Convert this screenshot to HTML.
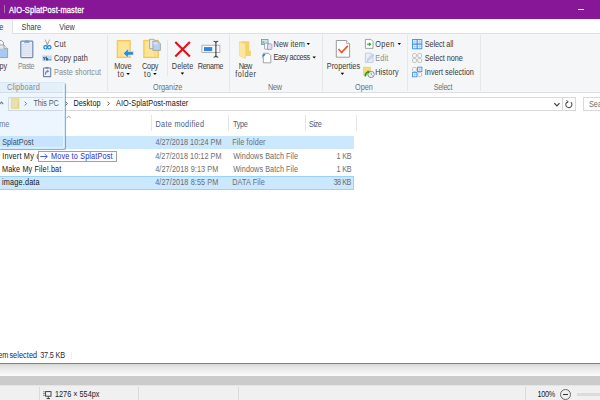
<!DOCTYPE html>
<html><head><meta charset="utf-8">
<style>
*{margin:0;padding:0;box-sizing:border-box}
html,body{width:600px;height:400px;overflow:hidden;background:#fff}
body{position:relative;font-family:"Liberation Sans",sans-serif;font-size:7.3px;line-height:1;color:#3a3a3a}
.a{position:absolute;white-space:nowrap}
.t{position:absolute;white-space:nowrap;line-height:8px;transform:scaleY(1.13);transform-origin:0 6.5px}
.sep{position:absolute;width:1px;background:#e6e7e8}
</style></head><body>

<div class="a" style="left:0;top:0;width:600px;height:19px;background:#881798"></div>
<div class="a" style="left:3.9px;top:4.6px;width:1.3px;height:8.6px;background:#a77ab3"></div>
<div class="a" style="left:577.5px;top:9px;width:6.5px;height:1px;background:#fff"></div>
<div class="a" style="left:0;top:19px;width:600px;height:15px;background:#fff;border-bottom:1px solid #dfe0e1"></div>
<div class="a" style="left:0;top:19px;width:13px;height:16px;background:#f5f6f7;border-right:1px solid #dfe0e1"></div>
<div class="a" style="left:0;top:34px;width:600px;height:59px;background:#f5f6f7;border-bottom:1px solid #dfe0e1"></div>
<div class="sep" style="left:107px;top:35px;height:56px"></div>
<div class="sep" style="left:229px;top:35px;height:56px"></div>
<div class="sep" style="left:322px;top:35px;height:56px"></div>
<div class="sep" style="left:407px;top:35px;height:56px"></div>
<div class="sep" style="left:480px;top:35px;height:56px"></div>
<div class="sep" style="left:167px;top:40px;height:36px"></div>
<div class="a" style="left:7.5px;top:97px;width:568px;height:13.5px;border:1px solid #d9d9d9"></div>
<div class="a" style="left:562px;top:97px;width:1px;height:13.5px;background:#d9d9d9"></div>
<div class="a" style="left:583px;top:97px;width:30px;height:13.5px;border:1px solid #d9d9d9"></div>
<div class="a" style="left:151px;top:115px;width:1px;height:16px;background:#e5e5e5"></div>
<div class="a" style="left:228px;top:115px;width:1px;height:16px;background:#e5e5e5"></div>
<div class="a" style="left:305px;top:115px;width:1px;height:16px;background:#e5e5e5"></div>
<div class="a" style="left:356px;top:115px;width:1px;height:16px;background:#e5e5e5"></div>
<div class="a" style="left:0;top:135.5px;width:354px;height:13.5px;background:#cce8ff"></div>
<div class="a" style="left:-2px;top:175.5px;width:356px;height:14px;background:#cce8ff;border:1px solid #99d1ff"></div>

<svg class="a" style="left:0;top:0" width="600" height="400" viewBox="0 0 600 400">
<!-- copy (partial) -->
<path d="M-6 40.5 H1.5 L3.5 42.5 V45" fill="none" stroke="#9a9a9a" stroke-width="1"/>
<path d="M-4 45 H4 L7.6 48.6 V57.6 H-4 Z" fill="#f4f8fd" stroke="#9a9a9a" stroke-width="1"/>
<rect x="-4" y="46" width="8" height="2.5" fill="#dde9f8"/>
<rect x="-4" y="48.5" width="11.1" height="8.6" fill="#a8c8f2"/>
<path d="M4 45 V48.6 H7.6" fill="#e8e8e8" stroke="#9a9a9a" stroke-width="0.8"/>
<!-- paste clipboard -->
<rect x="20.8" y="41.2" width="12" height="16.4" rx="0.8" fill="#e9eef8" stroke="#7189b2" stroke-width="1.2"/>
<g stroke="#c9d5ea" stroke-width="0.6">
<line x1="22" y1="44.5" x2="31.6" y2="44.5"/><line x1="22" y1="46.3" x2="31.6" y2="46.3"/><line x1="22" y1="48.1" x2="31.6" y2="48.1"/>
<line x1="22" y1="49.9" x2="31.6" y2="49.9"/><line x1="22" y1="51.7" x2="31.6" y2="51.7"/><line x1="22" y1="53.5" x2="31.6" y2="53.5"/><line x1="22" y1="55.3" x2="31.6" y2="55.3"/>
</g>
<path d="M24.5 42.6 L25.5 40.8 H28.1 L29.1 42.6 Z" fill="#8fa3c6" stroke="#7189b2" stroke-width="0.6"/>
<!-- scissors -->
<path d="M44.6 39.4 L45.4 39.4 L48.2 45 L47.2 45.4 Z" fill="#9c9ca4"/>
<path d="M50.1 39.4 L49.3 39.4 L46.5 45 L47.5 45.4 Z" fill="#9c9ca4"/>
<circle cx="45.5" cy="47.3" r="1.7" fill="none" stroke="#1c7fd4" stroke-width="1.1"/>
<circle cx="49.3" cy="47.3" r="1.7" fill="none" stroke="#1c7fd4" stroke-width="1.1"/>
<!-- copy path -->
<rect x="42.3" y="55.4" width="9.5" height="5.6" fill="#b7dbf8"/>
<path d="M43.1 56.9 L44.3 58.4 L45.5 56.9 M44.3 58.4 V60.2 M46.3 56.7 V60.1 H47.7 V58.5 H46.3" fill="none" stroke="#2e3a48" stroke-width="0.85"/>
<line x1="48.2" y1="59.7" x2="51.2" y2="59.7" stroke="#6686a6" stroke-width="0.8"/>
<!-- paste shortcut -->
<rect x="43.5" y="68" width="7.2" height="8.6" rx="0.4" fill="#eef2f9" stroke="#7085ae" stroke-width="1.15"/>
<rect x="45.6" y="67" width="2.9" height="1.5" fill="#7085ae"/>
<path d="M45.4 74.8 C45.5 72.3 46.3 71.2 48 71.2" fill="none" stroke="#7085ae" stroke-width="1.2"/>
<path d="M47.2 69.6 L49.3 71.2 L47.2 72.8 Z" fill="#7085ae"/>

<!-- move to -->
<rect x="117.2" y="40.6" width="13" height="17" fill="#fcdc78" stroke="#efc244" stroke-width="0.9"/>
<rect x="118.7" y="42.1" width="10" height="14" fill="#fde597"/>
<path d="M123.3 53.4 L128.3 48.6 V51.6 H133.4 V55.1 H128.3 V58 Z" fill="#2b8ae2" stroke="#fff" stroke-width="0.5"/>
<!-- copy to -->
<rect x="143.8" y="40.3" width="14.5" height="17.3" fill="#fcdc78" stroke="#efc244" stroke-width="0.9"/>
<rect x="145.3" y="41.8" width="11.5" height="14.3" fill="#fde597"/>
<line x1="155" y1="48" x2="155" y2="57.5" stroke="#f5d56c" stroke-width="0.7"/>
<path d="M149.6 39.3 H154 L156.2 41.5 V48.7 H149.6 Z" fill="#e6eef9" stroke="#9c9c9c" stroke-width="0.8"/>
<path d="M152.9 41 H157.8 L160.4 43.6 V50.4 H152.9 Z" fill="#b6d1f4" stroke="#9c9c9c" stroke-width="0.8"/>
<rect x="153.4" y="42.4" width="4" height="2" fill="#d8e6f8"/>
<!-- delete -->
<path d="M175.3 42 L189.9 56.4 M189.9 42 L175.3 56.4" stroke="#e0101c" stroke-width="2.1"/>
<!-- rename -->
<rect x="201.9" y="45.2" width="18" height="7.2" fill="#f8f8f8" stroke="#a2a2a2" stroke-width="0.8"/>
<rect x="204" y="47.1" width="8.2" height="4" fill="#2b88e0"/>
<path d="M213.6 41.3 Q215.9 41.3 215.9 43 V55.6 Q215.9 57.2 213.6 57.2 M218.2 41.3 Q215.9 41.3 215.9 43 M218.2 57.2 Q215.9 57.2 215.9 55.6" fill="none" stroke="#3a3a3a" stroke-width="1.1"/>

<!-- new folder -->
<path d="M240.5 41.2 H249.3 V50.6 H250.8 V56 H240.5 Z" fill="#f6d16a"/>
<path d="M239.4 41.6 L245.6 44 V58.4 L239.4 55.8 Z" fill="#fde7a0" stroke="#f3cf6c" stroke-width="0.5"/>
<!-- new item -->
<rect x="261.4" y="39.4" width="6.6" height="5" fill="#d2e5f7" stroke="#4a90d8" stroke-width="0.75"/>
<rect x="262.2" y="41.2" width="2.2" height="2.4" fill="#8cc06a"/>
<rect x="264.6" y="43.2" width="4" height="6" rx="0.5" fill="#fff" stroke="#8a8a8a" stroke-width="0.75"/>
<rect x="267.4" y="44" width="4.4" height="5.4" rx="0.5" fill="#f2dbe6" stroke="#8a8a8a" stroke-width="0.75"/>
<rect x="269.6" y="44.4" width="1.8" height="4.6" fill="#cfe4f7"/>
<!-- easy access -->
<path d="M263.3 53.3 H268.6 L270.8 55.5 V62.8 H263.3 Z" fill="#fff" stroke="#8c8c8c" stroke-width="0.8"/>
<path d="M261.2 58.6 L262.6 56.6 L262.2 55.6 L263.4 54.2 L265.6 53.8 L264.8 55.4 L263.6 56.2 Z" fill="#2f7fd6"/>

<!-- properties -->
<path d="M336.3 40.5 H346.5 L349.6 43.6 V57.2 H336.3 Z" fill="#fff" stroke="#9c9c9c" stroke-width="1"/>
<path d="M346.5 40.5 V43.6 H349.6" fill="#eee" stroke="#9c9c9c" stroke-width="0.7"/>
<path d="M338.5 49 L341.6 52.5 L347.8 45.8" fill="none" stroke="#e9552a" stroke-width="1.7"/>
<!-- open -->
<path d="M365.4 39.4 H371 L373 41.4 V48.4 H365.4 Z" fill="#fff" stroke="#8c8c8c" stroke-width="0.8"/>
<path d="M367 44.2 H370.2 M368.9 42.8 L370.6 44.2 L368.9 45.6" fill="none" stroke="#23a33a" stroke-width="1.1"/>
<!-- edit -->
<path d="M365.4 53.2 H371 L373 55.2 V62.4 H365.4 Z" fill="#e8eff8" stroke="#b7c6da" stroke-width="0.8"/>
<path d="M367 61.4 L368 58.6 L372.6 53.9 L373.8 55.1 L369.2 59.8 Z" fill="#d2ddec" stroke="#a9bad2" stroke-width="0.6"/>
<!-- history -->
<rect x="363.6" y="67.2" width="6.8" height="7.8" fill="#f8d977" stroke="#eec652" stroke-width="0.6"/>
<circle cx="371.1" cy="74.4" r="3.2" fill="#f0f0f0" stroke="#8a8a8a" stroke-width="0.9"/>
<path d="M371.1 72.6 V74.4 L372.4 75.4" fill="none" stroke="#6a6a6a" stroke-width="0.6"/>
<path d="M365.2 76.4 Q365.4 72.6 368.4 71.8" fill="none" stroke="#1ea12e" stroke-width="1.6"/><path d="M367.6 70.2 L370.2 71.9 L367.9 73.6 Z" fill="#1ea12e"/>

<!-- select all -->
<rect x="412" y="39" width="10.3" height="10.2" rx="0.7" fill="#3a8fe6"/>
<rect x="412.9" y="39.9" width="3.7" height="3.6" fill="#e2effc"/><path d="M414.75 39.9 V43.50 M412.9 41.70 H416.60" stroke="#8fc0f0" stroke-width="0.45"/><rect x="417.7" y="39.9" width="3.7" height="3.6" fill="#e2effc"/><path d="M419.55 39.9 V43.50 M417.7 41.70 H421.40" stroke="#8fc0f0" stroke-width="0.45"/><rect x="412.9" y="44.7" width="3.7" height="3.6" fill="#e2effc"/><path d="M414.75 44.7 V48.30 M412.9 46.50 H416.60" stroke="#8fc0f0" stroke-width="0.45"/><rect x="417.7" y="44.7" width="3.7" height="3.6" fill="#e2effc"/><path d="M419.55 44.7 V48.30 M417.7 46.50 H421.40" stroke="#8fc0f0" stroke-width="0.45"/>
<!-- select none -->
<g fill="#fafafa" stroke="#b0b0b0" stroke-width="0.8">
<rect x="412.6" y="53.6" width="3.8" height="3.8" rx="1"/><rect x="417.8" y="53.6" width="3.8" height="3.8" rx="1"/>
<rect x="412.6" y="58.6" width="3.8" height="3.8" rx="1"/><rect x="417.8" y="58.6" width="3.8" height="3.8" rx="1"/>
</g>
<!-- invert -->
<g fill="#fafafa" stroke="#b0b0b0" stroke-width="0.8">
<rect x="412.6" y="67.6" width="3.8" height="3.8" rx="1"/><rect x="417.8" y="72.6" width="3.8" height="3.8" rx="1"/>
</g>
<rect x="417" y="66.8" width="5.3" height="5.2" rx="0.5" fill="#3a8fe6"/><rect x="417.8" y="67.6" width="3.7" height="3.6" fill="#e2effc"/><path d="M419.65 67.6 V71.20 M417.8 69.40 H421.50" stroke="#8fc0f0" stroke-width="0.45"/>
<rect x="412" y="72" width="5.3" height="5.2" rx="0.5" fill="#3a8fe6"/><rect x="412.8" y="72.8" width="3.7" height="3.6" fill="#e2effc"/><path d="M414.65 72.8 V76.40 M412.8 74.60 H416.50" stroke="#8fc0f0" stroke-width="0.45"/>

<!-- dropdown triangles -->
<g fill="#000">
<path d="M126.3 72.9 H129.9 L128.1 75.1 Z"/>
<path d="M153.1 72.9 H156.7 L154.9 75.1 Z"/>
<path d="M180.7 72.5 H184.1 L182.4 74.8 Z"/>
<path d="M340.7 72.8 H344.1 L342.4 75 Z"/>
<path d="M306.6 43 H310 L308.3 45 Z"/>
<path d="M312.5 56.6 H315.9 L314.2 58.6 Z"/>
<path d="M397.6 42.9 H401 L399.3 44.9 Z"/>
</g>

<!-- address bar -->
<path d="M-0.4 104.2 L1.5 102.1 L3.2 104.2" fill="none" stroke="#5a5a5a" stroke-width="1.05"/>
<rect x="11.2" y="98.6" width="7.8" height="9.8" fill="#fbe290" stroke="#f0cc5c" stroke-width="0.6"/><rect x="17.6" y="102.5" width="1.4" height="5.9" fill="#f3cf66"/>
<g fill="none" stroke="#555" stroke-width="0.95">
<path d="M24.7 101.7 L26.6 103.6 L24.7 105.5"/>
<path d="M65.5 101.7 L67.4 103.6 L65.5 105.5"/>
<path d="M107.5 101.7 L109.4 103.6 L107.5 105.5"/>
<path d="M554.3 103.1 L556.9 105.9 L559.5 103.1" stroke="#3c3c3c" stroke-width="1.15"/>
</g>
<path d="M570.9 102.2 A3.1 3.1 0 1 1 567.6 101.7" fill="none" stroke="#505050" stroke-width="1.05"/>
<path d="M566.3 100.4 L568.3 101.8 L566.6 103.4" fill="none" stroke="#505050" stroke-width="0.95"/>
<!-- sort arrow -->
<path d="M66.6 118.2 L68.7 116.1 L70.8 118.2" fill="none" stroke="#8a8a8a" stroke-width="0.8"/>
</svg>

<div class="t" style="left:9.00px;top:6.57px;color:#fff;font-size:7.5px;letter-spacing:0.105px;-webkit-text-stroke:0.25px #fff">AIO-SplatPost-master</div>
<div class="t" style="left:-16.10px;top:23.77px;color:#3a3a3a;font-size:7.3px">Home</div>
<div class="t" style="left:21.60px;top:23.77px;color:#3a3a3a;font-size:7.3px;letter-spacing:-0.025px">Share</div>
<div class="t" style="left:59.20px;top:23.77px;color:#3a3a3a;font-size:7.3px">View</div>
<div class="t" style="left:-9.90px;top:62.68px;color:#3a3a3a;font-size:7.3px">Copy</div>
<div class="t" style="left:18.00px;top:62.68px;color:#8d8d8d;font-size:7.3px;letter-spacing:-0.500px">Paste</div>
<div class="t" style="left:54.00px;top:41.07px;color:#3a3a3a;font-size:7.3px;letter-spacing:0.250px">Cut</div>
<div class="t" style="left:54.00px;top:55.07px;color:#3a3a3a;font-size:7.3px;letter-spacing:0.062px">Copy path</div>
<div class="t" style="left:54.00px;top:69.07px;color:#8d8d8d;font-size:7.3px;letter-spacing:0.038px">Paste shortcut</div>
<div class="t" style="left:7.00px;top:84.07px;color:#707070;font-size:7.3px;letter-spacing:0.194px">Clipboard</div>
<div class="t" style="left:114.20px;top:62.68px;color:#3a3a3a;font-size:7.3px;letter-spacing:-0.131px">Move</div>
<div class="t" style="left:117.40px;top:70.88px;color:#3a3a3a;font-size:7.3px;letter-spacing:0.600px">to</div>
<div class="t" style="left:142.00px;top:62.68px;color:#3a3a3a;font-size:7.3px;letter-spacing:-0.203px">Copy</div>
<div class="t" style="left:144.00px;top:70.88px;color:#3a3a3a;font-size:7.3px;letter-spacing:0.600px">to</div>
<div class="t" style="left:171.80px;top:62.68px;color:#3a3a3a;font-size:7.3px;letter-spacing:0.060px">Delete</div>
<div class="t" style="left:197.80px;top:62.68px;color:#3a3a3a;font-size:7.3px;letter-spacing:-0.400px">Rename</div>
<div class="t" style="left:153.00px;top:84.07px;color:#707070;font-size:7.3px;letter-spacing:-0.028px">Organize</div>
<div class="t" style="left:238.80px;top:62.68px;color:#3a3a3a;font-size:7.3px;letter-spacing:-0.550px">New</div>
<div class="t" style="left:235.20px;top:70.88px;color:#3a3a3a;font-size:7.3px;letter-spacing:0.500px">folder</div>
<div class="t" style="left:273.50px;top:40.88px;color:#3a3a3a;font-size:7.3px;letter-spacing:0.118px">New item</div>
<div class="t" style="left:273.50px;top:54.28px;color:#3a3a3a;font-size:7.3px;letter-spacing:-0.435px">Easy access</div>
<div class="t" style="left:268.00px;top:84.07px;color:#707070;font-size:7.3px;letter-spacing:-0.250px">New</div>
<div class="t" style="left:326.80px;top:62.68px;color:#3a3a3a;font-size:7.3px">Properties</div>
<div class="t" style="left:375.20px;top:40.68px;color:#3a3a3a;font-size:7.3px;letter-spacing:0.398px">Open</div>
<div class="t" style="left:375.20px;top:55.07px;color:#8d8d8d;font-size:7.3px;letter-spacing:0.167px">Edit</div>
<div class="t" style="left:375.20px;top:68.88px;color:#3a3a3a;font-size:7.3px;letter-spacing:0.115px">History</div>
<div class="t" style="left:355.00px;top:84.07px;color:#707070;font-size:7.3px">Open</div>
<div class="t" style="left:424.80px;top:41.07px;color:#3a3a3a;font-size:7.3px;letter-spacing:-0.126px">Select all</div>
<div class="t" style="left:424.80px;top:55.07px;color:#3a3a3a;font-size:7.3px;letter-spacing:-0.060px">Select none</div>
<div class="t" style="left:424.80px;top:69.07px;color:#3a3a3a;font-size:7.3px">Invert selection</div>
<div class="t" style="left:433.80px;top:84.07px;color:#707070;font-size:7.3px;letter-spacing:-0.320px">Select</div>
<div class="t" style="left:33.40px;top:100.47px;color:#3a3a3a;font-size:7.3px;letter-spacing:-0.101px">This PC</div>
<div class="t" style="left:73.40px;top:100.47px;color:#151515;font-size:7.3px;letter-spacing:0.067px">Desktop</div>
<div class="t" style="left:116.00px;top:100.28px;color:#151515;font-size:7.3px;letter-spacing:0.068px">AIO-SplatPost-master</div>
<div class="t" style="left:589.00px;top:100.88px;color:#6d6d6d;font-size:7.3px">Search</div>
<div class="t" style="left:-10.20px;top:120.88px;color:#4c607a;font-size:7.3px">Name</div>
<div class="t" style="left:155.50px;top:121.07px;color:#4c607a;font-size:7.3px;letter-spacing:0.292px">Date modified</div>
<div class="t" style="left:233.00px;top:120.88px;color:#4c607a;font-size:7.3px;letter-spacing:-0.333px">Type</div>
<div class="t" style="left:309.00px;top:120.88px;color:#4c607a;font-size:7.3px;letter-spacing:-0.433px">Size</div>
<div class="t" style="left:2.20px;top:139.28px;color:#151515;font-size:7.3px;letter-spacing:0.006px">SplatPost</div>
<div class="t" style="left:155.40px;top:139.28px;color:#6d6d6d;font-size:7.3px;letter-spacing:0.023px">4/27/2018 10:24 PM</div>
<div class="t" style="left:232.20px;top:139.28px;color:#6d6d6d;font-size:7.3px;letter-spacing:0.130px">File folder</div>
<div class="t" style="left:2.20px;top:152.88px;color:#151515;font-size:7.3px;letter-spacing:0.200px">Invert My</div>
<div class="t" style="left:36.40px;top:152.88px;color:#151515;font-size:7.3px">colors.bat</div>
<div class="t" style="left:155.20px;top:152.88px;color:#6d6d6d;font-size:7.3px;letter-spacing:0.041px">4/27/2018 10:12 PM</div>
<div class="t" style="left:233.20px;top:152.88px;color:#6d6d6d;font-size:7.3px;letter-spacing:0.042px">Windows Batch File</div>
<div class="t" style="left:336.60px;top:152.88px;color:#6d6d6d;font-size:7.3px;letter-spacing:-0.233px">1 KB</div>
<div class="t" style="left:2.00px;top:165.88px;color:#151515;font-size:7.3px;letter-spacing:0.107px">Make My File!.bat</div>
<div class="t" style="left:155.20px;top:165.88px;color:#6d6d6d;font-size:7.3px;letter-spacing:0.095px">4/27/2018 9:13 PM</div>
<div class="t" style="left:233.20px;top:165.88px;color:#6d6d6d;font-size:7.3px;letter-spacing:0.042px">Windows Batch File</div>
<div class="t" style="left:336.60px;top:165.88px;color:#6d6d6d;font-size:7.3px;letter-spacing:-0.233px">1 KB</div>
<div class="t" style="left:2.00px;top:179.38px;color:#151515;font-size:7.3px;letter-spacing:0.167px">image.data</div>
<div class="t" style="left:155.20px;top:179.38px;color:#6d6d6d;font-size:7.3px;letter-spacing:0.095px">4/27/2018 8:55 PM</div>
<div class="t" style="left:232.20px;top:179.38px;color:#6d6d6d;font-size:7.3px;letter-spacing:0.100px">DATA File</div>
<div class="t" style="left:333.40px;top:179.38px;color:#6d6d6d;font-size:7.3px;letter-spacing:-0.450px">38 KB</div>

<div class="a" style="left:-2px;top:82px;width:66.6px;height:66.6px;background:rgba(180,218,252,0.24);border:1px solid rgba(210,232,248,0.9);border-radius:2px;box-shadow:inset -1px -1px 0 rgba(245,250,255,0.6),1px 1px 0.7px rgba(70,80,95,0.5)"></div>


<div class="a" style="left:38px;top:150.5px;width:79px;height:11.5px;background:#fff;border:1px solid #a0a0a0"></div>
<svg class="a" style="left:0;top:0" width="600" height="400"><path d="M40.2 156.5 H47.2 M44.6 153.9 L47.3 156.5 L44.6 159.1" fill="none" stroke="#3b4fd6" stroke-width="0.9"/></svg>

<div class="t" style="left:51.00px;top:152.97px;color:#2a2ad0;font-size:7.3px;letter-spacing:0.143px">Move to SplatPost</div>
<div class="t" style="left:-11.50px;top:352.18px;color:#1e2b3c;font-size:7.3px">1 item</div>
<div class="t" style="left:9.40px;top:352.18px;color:#1e2b3c;font-size:7.3px;letter-spacing:0.072px">selected</div>
<div class="t" style="left:40.20px;top:352.18px;color:#1e2b3c;font-size:7.3px;letter-spacing:-0.165px">37.5 KB</div>
<div class="a" style="left:71px;top:352px;width:1px;height:7px;background:#f0f0f0"></div>

<div class="a" style="left:0;top:362.6px;width:600px;height:1.3px;background:#a862b6"></div>
<div class="a" style="left:0;top:363.9px;width:600px;height:11.9px;background:linear-gradient(#d4d8d4,#e6e6e6 25%,#f2f2f2 70%,#f8f8f8 92%,#fdfdfd)"></div>
<div class="a" style="left:0;top:375.8px;width:600px;height:9px;background:#cbcbcb"></div>
<div class="a" style="left:0;top:384.8px;width:600px;height:15.2px;background:#f0f0f0;border-top:1px solid #e4e4e4"></div>
<div class="a" style="left:39px;top:386.5px;width:1px;height:13.5px;background:#dadada"></div>
<div class="a" style="left:137.8px;top:386.5px;width:1px;height:13.5px;background:#dadada"></div>
<div class="a" style="left:238px;top:386.5px;width:1px;height:13.5px;background:#dadada"></div>
<div class="a" style="left:524.5px;top:386.5px;width:1px;height:13.5px;background:#dadada"></div>
<div class="a" style="left:560px;top:389.2px;width:11px;height:11px;border:1px solid #666;border-radius:50%"></div>
<div class="a" style="left:562.6px;top:394.1px;width:5.8px;height:1.3px;background:#333"></div>
<div class="a" style="left:577px;top:393.3px;width:30px;height:2.3px;background:#dcdcdc"></div>
<svg class="a" style="left:0;top:0" width="600" height="400">
<path d="M43.3 391.8 H44.6 M43.3 393.6 H44.6 M43.3 395.4 H44.6" stroke="#333" stroke-width="0.8"/>
<rect x="45.6" y="391.6" width="5.4" height="4.6" fill="none" stroke="#333" stroke-width="0.9"/>
<path d="M46.6 398.6 H50" stroke="#333" stroke-width="0.9"/>
<line x1="48.3" y1="396.2" x2="48.3" y2="398.6" stroke="#333" stroke-width="0.8"/>
</svg>

<div class="t" style="left:55.00px;top:391.18px;color:#222;font-size:7.3px">1276 × 554px</div>
<div class="t" style="left:537.60px;top:391.18px;color:#222;font-size:7.3px;letter-spacing:-0.365px">100%</div>
</body></html>
